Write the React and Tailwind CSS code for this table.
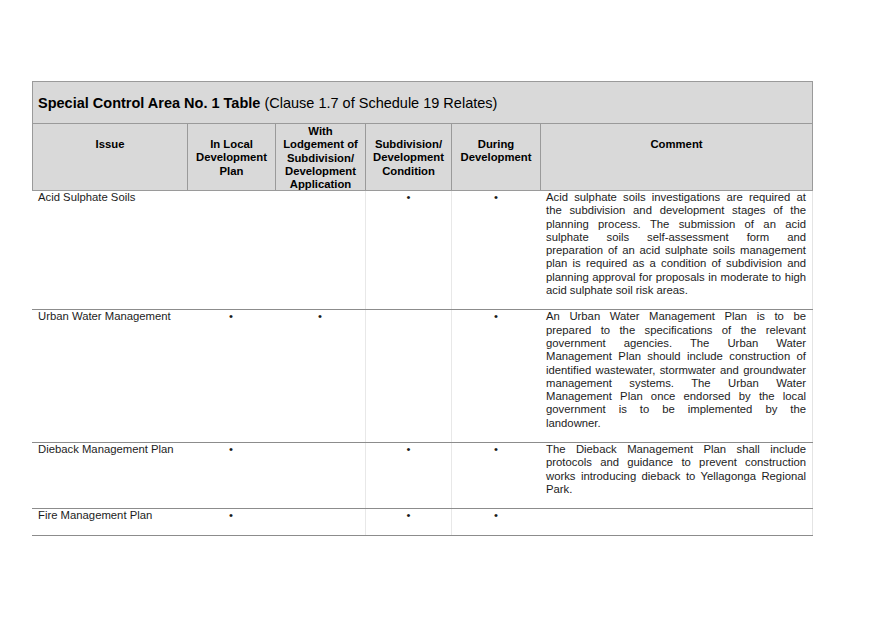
const cols = 'grid grid-cols-[155px_88px_90px_86px_89px_273px]';

const rows = [
  {
    issue: 'Acid Sulphate Soils',
    marks: [false, false, true, true],
    comment: [
      'Acid sulphate soils investigations are required at',
      'the subdivision and development stages of the',
      'planning process. The submission of an acid',
      'sulphate soils self-assessment form and',
      'preparation of an acid sulphate soils management',
      'plan is required as a condition of subdivision and',
      'planning approval for proposals in moderate to high',
      'acid sulphate soil risk areas.',
    ],
  },
  {
    issue: 'Urban Water Management',
    marks: [true, true, false, true],
    comment: [
      'An Urban Water Management Plan is to be',
      'prepared to the specifications of the relevant',
      'government agencies. The Urban Water',
      'Management Plan should include construction of',
      'identified wastewater, stormwater and groundwater',
      'management systems. The Urban Water',
      'Management Plan once endorsed by the local',
      'government is to be implemented by the',
      'landowner.',
    ],
  },
  {
    issue: 'Dieback Management Plan',
    marks: [true, false, true, true],
    comment: [
      'The Dieback Management Plan shall include',
      'protocols and guidance to prevent construction',
      'works introducing dieback to Yellagonga Regional',
      'Park.',
    ],
  },
  {
    issue: 'Fire Management Plan',
    marks: [true, false, true, true],
    comment: [],
  },
];

function HeadCell({ children, first, tall }) {
  return (
    <div
      className={`text-center font-bold ${tall ? 'pt-[1px]' : 'pt-[14px]'} ${
        first ? '' : 'border-l border-[#9a9a9a]'
      }`}
    >
      {children}
    </div>
  );
}

function Mark({ on, className = '' }) {
  return <div className={`text-center ${className}`}>{on ? '•' : ''}</div>;
}

function Comment({ lines }) {
  return (
    <div className="px-[6px] pb-[12px] border-r border-[#e4e4e4]">
      {lines.map((line, i) => (
        <div
          key={i}
          className={`whitespace-nowrap text-justify ${
            i < lines.length - 1 ? '[text-align-last:justify]' : ''
          }`}
        >
          {line}
        </div>
      ))}
    </div>
  );
}

export default function App() {
  return (
    <div className="min-h-[619px] bg-white font-['Liberation_Sans',Arial,sans-serif] text-[#1c1c1c]">
      <div className="pt-[81px] pl-[32px]">
        <div className="w-[781px]">
          {/* Header block */}
          <div className="border border-[#9a9a9a] bg-[#d9d9d9] text-black">
            <div className="h-[42px] flex items-center px-[5px] pt-[2px] border-b border-[#9a9a9a] text-[14.5px]">
              <span className="font-bold">Special Control Area No. 1 Table</span>
              <span>&nbsp;(Clause 1.7 of Schedule 19 Relates)</span>
            </div>
            <div className="grid grid-cols-[154px_88px_90px_86px_89px_272px] h-[66px] text-[11.3px] leading-[13.3px]">
              <HeadCell first>Issue</HeadCell>
              <HeadCell>
                In Local
                <br />
                Development
                <br />
                Plan
              </HeadCell>
              <HeadCell tall>
                With
                <br />
                Lodgement of
                <br />
                Subdivision/
                <br />
                Development
                <br />
                Application
              </HeadCell>
              <HeadCell>
                Subdivision/
                <br />
                Development
                <br />
                Condition
              </HeadCell>
              <HeadCell>
                During
                <br />
                Development
              </HeadCell>
              <HeadCell>Comment</HeadCell>
            </div>
          </div>

          {/* Body rows */}
          {rows.map((row) => (
            <div
              key={row.issue}
              className={`${cols} border-b border-[#8c8c8c] text-[11.3px] leading-[13.3px]`}
            >
              <div className="pl-[6px] pb-[12px]">{row.issue}</div>
              <Mark on={row.marks[0]} />
              <Mark on={row.marks[1]} />
              <Mark on={row.marks[2]} className="border-l border-[#e8e8e8]" />
              <Mark on={row.marks[3]} className="border-l border-[#e8e8e8]" />
              <Comment lines={row.comment} />
            </div>
          ))}
        </div>
      </div>
    </div>
  );
}
